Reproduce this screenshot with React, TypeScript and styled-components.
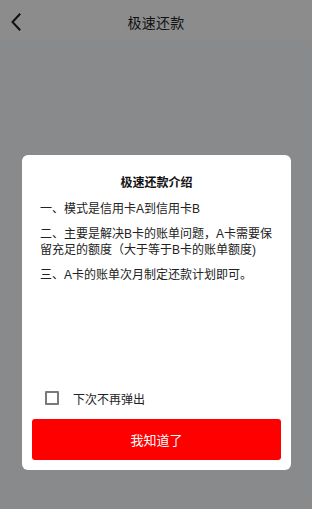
import styled, { createGlobalStyle } from 'styled-components'

const GlobalStyle = createGlobalStyle`
  html, body {
    margin: 0;
    padding: 0;
  }
  body {
    font-family: "Liberation Sans", "Noto Sans CJK SC", sans-serif;
    background: #888a8b;
  }
`

const BackIcon = () => (
  <svg width="12" height="18" viewBox="0 0 12 18" fill="none">
    <path d="M9.5 1.5L2.5 9L9.5 16.5" stroke="#111" strokeWidth="2" strokeLinecap="square" />
  </svg>
)

const App = () => {
  return (
    <Page>
      <GlobalStyle />
      <Header>
        <BackButton>
          <BackIcon />
        </BackButton>
        <Title>极速还款</Title>
      </Header>

      <Modal>
        <ModalTitle>极速还款介绍</ModalTitle>
        <Body>
          <Para>一、模式是信用卡A到信用卡B</Para>
          <Para>二、主要是解决B卡的账单问题，A卡需要保留充足的额度（大于等于B卡的账单额度)</Para>
          <Para>三、A卡的账单次月制定还款计划即可。</Para>
        </Body>

        <Footer>
          <CheckRow>
            <Box />
            <CheckLabel>下次不再弹出</CheckLabel>
          </CheckRow>
          <OkButton>我知道了</OkButton>
        </Footer>
      </Modal>
    </Page>
  )
}

const Page = styled.div`
  width: 312px;
  height: 509px;
  background: #888a8b;
  display: flex;
  flex-direction: column;
  overflow: hidden;
`

const Header = styled.div`
  height: 40px;
  background: #8c8c8c;
  display: flex;
  align-items: center;
  justify-content: center;
  position: relative;
`

const BackButton = styled.div`
  position: absolute;
  left: 10px;
  top: 13px;
  display: flex;
`

const Title = styled.h1`
  margin: 0;
  font-size: 14px;
  font-weight: 400;
  color: #111;
  letter-spacing: 0.3px;
  margin-top: 4px;
`

const Modal = styled.div`
  margin: 115px 0 0 22px;
  width: 269px;
  height: 315px;
  background: #fff;
  border-radius: 6px;
  display: flex;
  flex-direction: column;
  box-sizing: border-box;
`

const ModalTitle = styled.h2`
  margin: 19px 0 0;
  text-align: center;
  font-size: 12px;
  font-weight: 700;
  line-height: 18px;
  color: #111;
`

const Body = styled.div`
  padding: 9px 17px 0 18px;
  display: flex;
  flex-direction: column;
  gap: 9px;
`

const Para = styled.p`
  margin: 0;
  font-size: 12px;
  line-height: 16px;
  color: #222;
`

const Footer = styled.div`
  margin-top: auto;
  padding: 0 10px 10px;
  display: flex;
  flex-direction: column;
`

const CheckRow = styled.div`
  display: flex;
  align-items: center;
  padding-left: 13px;
  height: 18px;
  margin-bottom: 12px;
`

const Box = styled.span`
  width: 14px;
  height: 14px;
  box-sizing: border-box;
  border: 2px solid #7a7a7a;
  border-radius: 1px;
  margin-right: 14px;
`

const CheckLabel = styled.span`
  font-size: 12px;
  color: #222;
`

const OkButton = styled.button`
  height: 41px;
  border: none;
  border-radius: 3px;
  background: #ff0000;
  color: #fff;
  font-family: inherit;
  font-size: 13px;
  padding: 0;
`

export default App
